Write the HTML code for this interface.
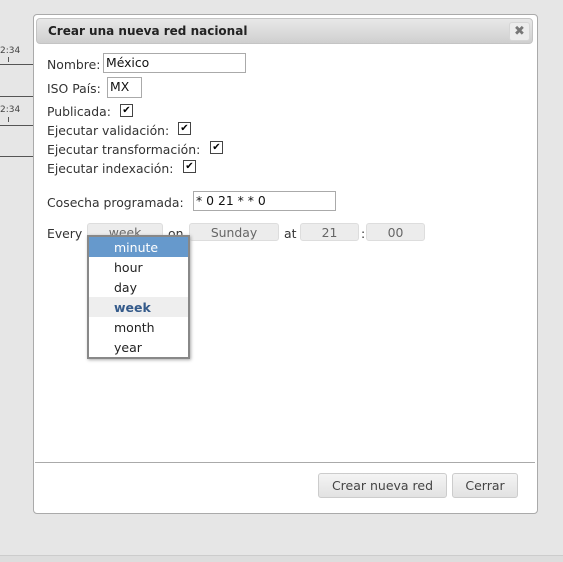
<html><head><style>
body{margin:0;width:563px;height:561px;background:#e6e6e6;position:relative;overflow:hidden;font-family:"DejaVu Sans",Verdana,sans-serif;font-size:12.4px;color:#333}
.a{position:absolute}
.line{position:absolute;left:0;width:33px;height:1px;background:#555}
.dlg{left:33px;top:14px;width:503px;height:498px;background:#fff;border:1px solid #aaa;border-radius:4px}
.tb{left:36px;top:18px;width:497px;height:26px;background:linear-gradient(#e8e8e8,#cfcfcf);border:1px solid #c4c4c4;border-radius:4px;box-sizing:border-box}
.tb b{position:absolute;left:11px;top:5px;font-size:12px;color:#222}
.x{left:509px;top:22px;width:21px;height:19px;background:#ececec;border:1px solid #d6d6d6;border-radius:3px;color:#777;font-weight:bold;text-align:center;line-height:18px;font-size:13px;box-sizing:border-box}
.in{position:absolute;border:1px solid #aaa;height:18px;box-sizing:border-box;padding-left:2px;line-height:18px;color:#111}
.cb{position:absolute;width:11px;height:11px;border:1px solid #444;font-size:10px;line-height:11px;text-align:center;color:#000;font-weight:bold}
.sel{position:absolute;height:18px;top:223px;background:#ececec;border:1px solid #ddd;border-radius:3px;text-align:center;line-height:17px;color:#666;box-sizing:border-box}
.dd{left:87px;top:235px;width:103px;height:124px;background:#fff;border:2px solid #888;box-sizing:border-box;box-shadow:1px 1px 3px #aaa}
.dd div{height:20px;line-height:21px;padding-left:25px;color:#222;font-size:12.5px}
.btn{position:absolute;top:473px;height:25px;background:linear-gradient(#f4f4f4,#e2e2e2);border:1px solid #ccc;border-radius:3px;box-sizing:border-box;text-align:center;line-height:24px;color:#444;font-size:12.5px}
</style></head><body>
<div class="a" style="left:0;top:46px;font-size:9px;color:#444">2:34</div>
<div class="a" style="left:8px;top:57px;width:1px;height:5px;background:#555"></div>
<div class="line" style="top:64px"></div>
<div class="line" style="top:96px"></div>
<div class="a" style="left:0;top:105px;font-size:9px;color:#444">2:34</div>
<div class="a" style="left:8px;top:117px;width:1px;height:5px;background:#555"></div>
<div class="line" style="top:125px"></div>
<div class="line" style="top:156px"></div>
<div class="a" style="left:0;top:555px;width:563px;height:6px;background:#ddd;border-top:1px solid #ccc"></div>
<div class="a dlg"></div>
<div class="a tb"><b>Crear una nueva red nacional</b></div>
<div class="a x">✖</div>
<div class="a" style="left:47px;top:57px">Nombre:</div><div class="in" style="left:103px;top:53px;width:143px;height:20px">México</div>
<div class="a" style="left:47px;top:81px">ISO País:</div><div class="in" style="left:107px;top:77px;width:35px;height:21px">MX</div>
<div class="a" style="left:47px;top:104px">Publicada:</div><div class="cb" style="left:120px;top:104px">✔</div>
<div class="a" style="left:47px;top:123px">Ejecutar validación:</div><div class="cb" style="left:178px;top:122px">✔</div>
<div class="a" style="left:47px;top:142px">Ejecutar transformación:</div><div class="cb" style="left:210px;top:141px">✔</div>
<div class="a" style="left:47px;top:161px">Ejecutar indexación:</div><div class="cb" style="left:183px;top:160px">✔</div>
<div class="a" style="left:47px;top:195px">Cosecha programada:</div><div class="in" style="left:193px;top:191px;width:143px;height:20px">* 0 21 * * 0</div>
<div class="a" style="left:47px;top:226px">Every</div>
<div class="sel" style="left:87px;width:76px">week</div>
<div class="a" style="left:168px;top:226px">on</div>
<div class="sel" style="left:189px;width:90px">Sunday</div>
<div class="a" style="left:284px;top:226px">at</div>
<div class="sel" style="left:300px;width:59px">21</div>
<div class="a" style="left:361px;top:226px">:</div>
<div class="sel" style="left:366px;width:59px">00</div>
<div class="a dd">
<div style="background:#6699cc;color:#fff">minute</div><div>hour</div><div>day</div>
<div style="background:#eee;color:#345a8a;font-weight:bold">week</div><div>month</div><div>year</div></div>
<div class="a" style="left:35px;top:462px;width:500px;height:1px;background:#aaa"></div>
<div class="btn" style="left:318px;width:129px">Crear nueva red</div>
<div class="btn" style="left:452px;width:66px">Cerrar</div>
</body></html>
